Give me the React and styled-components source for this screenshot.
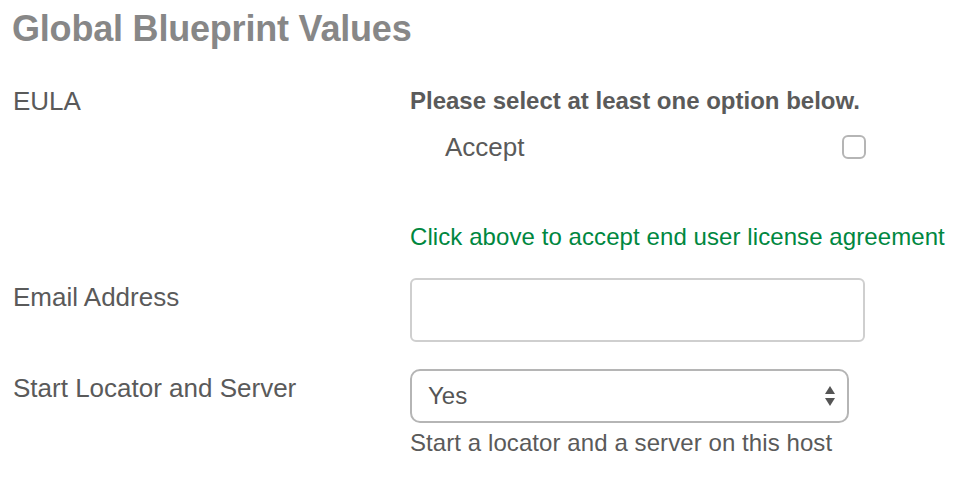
import styled, { createGlobalStyle } from "styled-components"

const Global = createGlobalStyle`
    body {
        margin: 0;
        background: #ffffff;
        font-family: "Liberation Sans", Arial, sans-serif;
        color: #555555;
    }
`

const Page = styled.div`
    padding: 7px 0 0 12px;
`

const Title = styled.h1`
    margin: 0 0 31px;
    font-size: 36px;
    line-height: 44px;
    font-weight: bold;
    color: #878787;
    letter-spacing: -0.2px;
`

const Row = styled.div`
    display: grid;
    grid-template-columns: 398px 1fr;
    margin-bottom: ${p => p.$gap || 0}px;
`

const Label = styled.div`
    font-size: 26px;
    line-height: 38px;
    padding-left: 1px;
    color: #5a5a5a;
`

const Field = styled.div`
    display: flex;
    flex-direction: column;
`

const Prompt = styled.div`
    font-size: 24px;
    line-height: 38px;
    font-weight: bold;
    color: #5a5a5a;
`

const Option = styled.label`
    display: flex;
    align-items: center;
    justify-content: space-between;
    width: 456px;
    margin-top: 8px;
    padding-left: 35px;
    box-sizing: border-box;
    font-size: 26px;
    line-height: 38px;
    color: #5a5a5a;
`

const Check = styled.span`
    width: 24px;
    height: 24px;
    box-sizing: border-box;
    border: 2px solid #b5b5b5;
    border-radius: 6px;
    background: #fff;
`

const Note = styled.div`
    font-size: 24px;
    line-height: 30px;
    letter-spacing: 0.08px;
    color: ${p => p.$green ? "#00873f" : "#5a5a5a"};
    margin-top: ${p => p.$top || 0}px;
`

const Input = styled.div`
    width: 455px;
    height: 64px;
    box-sizing: border-box;
    border: 2px solid #cfcfcf;
    border-radius: 6px;
    background: #fff;
`

const Select = styled.div`
    display: flex;
    align-items: center;
    justify-content: space-between;
    width: 439px;
    height: 54px;
    box-sizing: border-box;
    padding: 0 11px 0 16px;
    border: 2px solid #b5b5b5;
    border-radius: 10px;
    font-size: 24px;
    color: #555;
`

const Arrows = () => (
    <svg width="12" height="22" viewBox="0 0 12 22">
        <path d="M6 1 L11 9 L1 9 Z" fill="#555" />
        <path d="M6 21 L11 13 L1 13 Z" fill="#555" />
    </svg>
)

const App = () => {
    return (
        <Page>
            <Global />
            <Title>Global Blueprint Values</Title>
            <Row $gap={26}>
                <Label>EULA</Label>
                <Field>
                    <Prompt>Please select at least one option below.</Prompt>
                    <Option>
                        Accept
                        <Check />
                    </Option>
                    <Note $green $top={56}>Click above to accept end user license agreement</Note>
                </Field>
            </Row>
            <Row $gap={27}>
                <Label>Email Address</Label>
                <Input />
            </Row>
            <Row>
                <Label>Start Locator and Server</Label>
                <Field>
                    <Select>
                        Yes
                        <Arrows />
                    </Select>
                    <Note $top={5}>Start a locator and a server on this host</Note>
                </Field>
            </Row>
        </Page>
    )
}

export default App
